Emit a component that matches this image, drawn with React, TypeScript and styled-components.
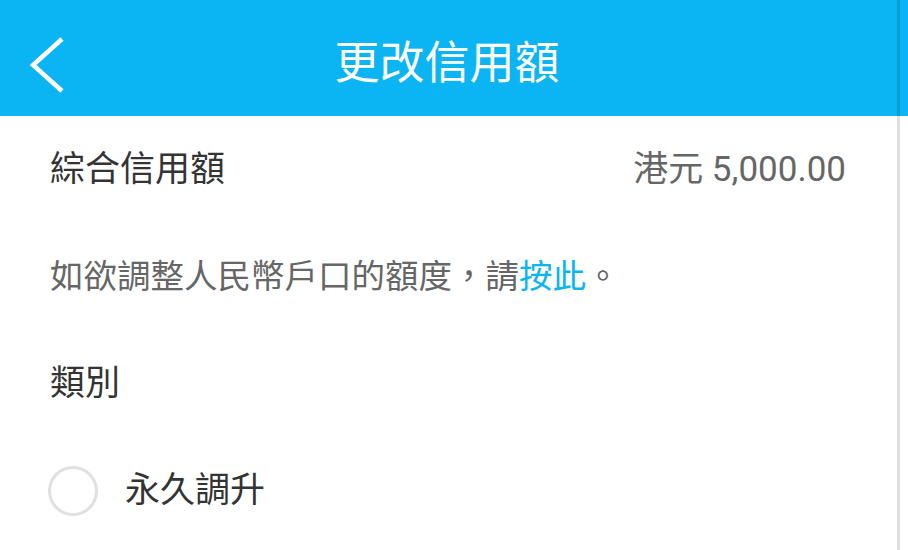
import React from "react";
import styled, { createGlobalStyle } from "styled-components";

const GlobalStyle = createGlobalStyle`
  html, body {
    margin: 0;
    padding: 0;
    background: #ffffff;
  }
  body {
    font-family: Roboto, "Noto Sans CJK TC", sans-serif;
  }
`;

const Page = styled.div`
  position: relative;
  width: 908px;
  height: 550px;
  overflow: hidden;
  background: #ffffff;
`;

const Header = styled.header`
  height: 116px;
  box-sizing: border-box;
  padding-top: 10px;
  background: #0bb4f2;
  display: flex;
  align-items: center;
`;

const BackButton = styled.button`
  width: 90px;
  height: 106px;
  border: 0;
  padding: 4px 0 0 30px;
  background: transparent;
  display: flex;
  align-items: center;
  justify-content: flex-start;
  cursor: pointer;
`;

const Title = styled.h1`
  flex: 1;
  margin: 0 0 0 -90px;
  padding-right: 14px;
  text-align: center;
  color: #ffffff;
  font-size: 45px;
  font-weight: 400;
  line-height: 1;
  pointer-events: none;
`;

const Content = styled.main`
  width: 897px;
  padding: 0 51px 0 50px;
  box-sizing: border-box;
`;

const Row = styled.div<{ $between?: boolean }>`
  height: 107px;
  display: flex;
  align-items: center;
  justify-content: ${(p) => (p.$between ? "space-between" : "flex-start")};
`;

const Label = styled.span<{ $muted?: boolean; $size?: number }>`
  font-size: ${(p) => p.$size ?? 35}px;
  color: ${(p) => (p.$muted ? "#666666" : "#333333")};
  line-height: 1;
`;

const Link = styled.a`
  color: #0bb4f2;
  text-decoration: none;
`;

const Radio = styled.span`
  width: 44px;
  height: 44px;
  border: 3px solid #e0e0e0;
  border-radius: 50%;
  margin-left: -2px;
  margin-right: 27px;
  flex-shrink: 0;
`;

const ScrollTrack = styled.div`
  position: absolute;
  top: 0;
  bottom: 0;
  left: 897px;
  width: 3px;
  background: rgba(0, 0, 0, 0.12);
`;

export default function App() {
  return (
    <>
      <GlobalStyle />
      <Page>
        <Header>
          <BackButton aria-label="返回">
            <svg width="40" height="60" viewBox="0 0 40 60">
              <polyline
                points="32,4 3,30 32,56"
                fill="none"
                stroke="#ffffff"
                strokeWidth="4.5"
              />
            </svg>
          </BackButton>
          <Title>更改信用額</Title>
        </Header>
        <Content>
          <Row $between>
            <Label>綜合信用額</Label>
            <Label $muted>港元 5,000.00</Label>
          </Row>
          <Row>
            <Label $muted $size={33.5}>
              如欲調整人民幣戶口的額度，請<Link href="#">按此</Link>。
            </Label>
          </Row>
          <Row>
            <Label>類別</Label>
          </Row>
          <Row>
            <Radio />
            <Label>永久調升</Label>
          </Row>
        </Content>
        <ScrollTrack />
      </Page>
    </>
  );
}
